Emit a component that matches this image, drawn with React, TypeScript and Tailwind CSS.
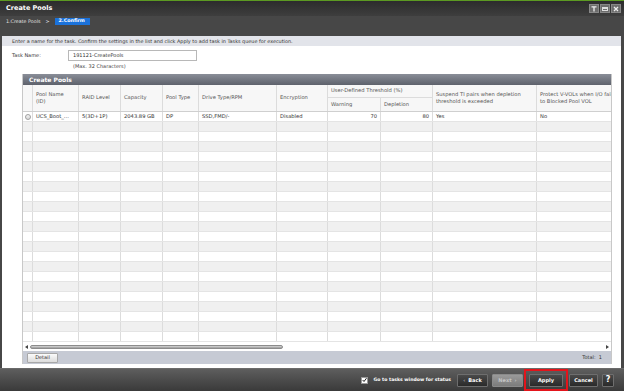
import React from "react";

const cols = [10, 46, 42, 42, 36, 78, 51, 53, 52, 104, 110];

function Cell({ w, children, className = "" }: { w: number; children?: React.ReactNode; className?: string }) {
  return (
    <div
      className={`shrink-0 h-full border-r border-[#dcdcdc] flex items-center overflow-hidden whitespace-nowrap ${className}`}
      style={{ width: w }}
    >
      {children}
    </div>
  );
}

function DataRow({ i, first }: { i: number; first?: boolean }) {
  const bg = i % 2 === 0 ? "bg-white" : "bg-[#f0f0f0]";
  return (
    <div className={`flex h-[10px] border-b border-[#e4e4e4] ${bg}`}>
      {cols.map((w, ci) => {
        let content: React.ReactNode = null;
        let cls = "px-[3px]";
        if (first) {
          const vals = ["", "UCS_Boot_...", "5(3D+1P)", "2043.89 GB", "DP", "SSD,FMD/-", "Disabled", "70", "80", "Yes", "No"];
          if (ci === 0) {
            content = <div className="w-[6px] h-[6px] rounded-full border border-[#a0a0a0] bg-gradient-to-b from-[#f4f4f4] to-[#d8d8d8] ml-[1px]" />;
            cls = "justify-center";
          } else {
            content = vals[ci];
            if (ci === 7 || ci === 8) cls = "px-[3px] justify-end";
          }
        }
        return (
          <Cell key={ci} w={w} className={cls}>
            {content}
          </Cell>
        );
      })}
    </div>
  );
}

function FooterBtn({ children, disabled, w }: { children: React.ReactNode; disabled?: boolean; w: number }) {
  return (
    <div
      className={`h-[13px] flex items-center justify-center text-[5px] font-bold rounded-[1px] border ${
        disabled
          ? "bg-gradient-to-b from-[#9a9a9a] to-[#7c7c7c] border-[#8a8a8a] text-[#c4c4c4]"
          : "bg-gradient-to-b from-[#4a4a4a] to-[#2a2a2a] border-[#6e6e6e] text-white"
      }`}
      style={{ width: w }}
    >
      {children}
    </div>
  );
}

export default function App() {
  return (
    <div className="w-[624px] h-[391px] flex flex-col overflow-hidden bg-[#474747] font-['DejaVu_Sans',sans-serif] leading-none">
      {/* title bar */}
      <div className="h-[16px] shrink-0 border-t border-[#5c9a22] bg-gradient-to-b from-[#2c2c2c] to-[#3e3e3e] flex items-center justify-between pl-[6px] pr-[3px]">
        <span className="text-white font-bold text-[6.5px]">Create Pools</span>
        <div className="flex gap-[1px]">
          <div className="w-[10px] h-[9px] bg-[#6d6d6d] border border-[#888] flex items-center justify-center">
            <svg width="6" height="6" viewBox="0 0 6 6">
              <path d="M0.5 0.8 H5.5 M3 0.8 V5.5" stroke="#eee" strokeWidth="1.3" />
            </svg>
          </div>
          <div className="w-[10px] h-[9px] bg-[#6d6d6d] border border-[#888] flex items-center justify-center">
            <div className="w-[6px] h-[4px] border border-[#ddd] border-t-2" />
          </div>
          <div className="w-[10px] h-[9px] bg-[#6d6d6d] border border-[#888] flex items-center justify-center">
            <svg width="6" height="6" viewBox="0 0 6 6">
              <path d="M1 1 L5 5 M5 1 L1 5" stroke="#eee" strokeWidth="1.3" />
            </svg>
          </div>
        </div>
      </div>
      {/* breadcrumb */}
      <div className="h-[20px] shrink-0 bg-[#474747] flex items-start pt-[2px] pl-[6px] gap-[5px] text-[4.8px] text-[#e0e0e0]">
        <span className="mt-[2px]">1.Create Pools</span>
        <span className="mt-[2px]">&gt;</span>
        <span className="bg-[#1b72db] text-white font-bold h-[7px] px-[4px] flex items-center w-[35px]">2.Confirm</span>
      </div>
      {/* body */}
      <div className="flex-1 flex flex-col bg-white ml-[2px] mr-[3px] min-h-0">
        <div className="h-[10px] shrink-0 bg-[#e2e4ea] flex items-center pl-[10px] text-[4.9px] text-[#333]">
          Enter a name for the task. Confirm the settings in the list and click Apply to add task in Tasks queue for execution.
        </div>
        <div className="h-[28px] shrink-0 flex flex-col pl-[10px] pt-[4px]">
          <div className="flex items-center">
            <span className="w-[56px] text-[5px] text-[#333]">Task Name:</span>
            <div className="w-[129px] h-[11px] border border-[#b8b8b8] flex items-center pl-[4px] text-[5px] text-[#333]">
              191121-CreatePools
            </div>
          </div>
          <span className="ml-[61px] mt-[3px] text-[5px] text-[#444]">(Max. 32 Characters)</span>
        </div>
        {/* panel */}
        <div className="ml-[20px] w-[590px] h-[290px] shrink-0 flex flex-col overflow-hidden border-x border-[#c8c8c8] text-[5.2px] text-[#333]">
          <div className="h-[11px] shrink-0 bg-gradient-to-b from-[#8a8e98] to-[#5e626c] flex items-center pl-[6px] text-white font-bold text-[6px]">
            Create Pools
          </div>
          {/* header */}
          <div className="h-[27px] shrink-0 flex bg-[#f7f7f7] border-b border-[#cfcfcf] text-[#555]">
            <Cell w={cols[0]} />
            <Cell w={cols[1]} className="px-[3px] items-start pt-[7px]">
              <div className="flex flex-col gap-[2px] whitespace-nowrap">
                <span>Pool Name</span>
                <span>(ID)</span>
              </div>
            </Cell>
            <Cell w={cols[2]} className="px-[3px]">RAID Level</Cell>
            <Cell w={cols[3]} className="px-[3px]">Capacity</Cell>
            <Cell w={cols[4]} className="px-[3px]">Pool Type</Cell>
            <Cell w={cols[5]} className="px-[3px]">Drive Type/RPM</Cell>
            <Cell w={cols[6]} className="px-[3px]">Encryption</Cell>
            <div className="shrink-0 flex flex-col border-r border-[#dcdcdc]" style={{ width: cols[7] + cols[8] }}>
              <div className="h-[13px] flex items-center px-[3px] border-b border-[#dcdcdc] whitespace-nowrap">
                User-Defined Threshold (%)
              </div>
              <div className="flex flex-1">
                <Cell w={cols[7]} className="px-[3px]">Warning</Cell>
                <div className="flex items-center px-[3px]" style={{ width: cols[8] - 1 }}>
                  Depletion
                </div>
              </div>
            </div>
            <Cell w={cols[9]} className="px-[3px]">
              <div className="flex flex-col gap-[2px]">
                <span>Suspend TI pairs when depletion</span>
                <span>threshold is exceeded</span>
              </div>
            </Cell>
            <Cell w={cols[10]} className="px-[3px]">
              <div className="flex flex-col gap-[2px]">
                <span>Protect V-VOLs when I/O fails</span>
                <span>to Blocked Pool VOL</span>
              </div>
            </Cell>
          </div>
          {/* rows */}
          <div className="h-[230px] shrink-0 flex flex-col overflow-hidden">
            {Array.from({ length: 23 }).map((_, i) => (
              <DataRow key={i} i={i} first={i === 0} />
            ))}
          </div>
          {/* scrollbar */}
          <div className="h-[9px] shrink-0 bg-white flex items-center px-[2px] gap-[2px]">
            <svg width="3" height="4" viewBox="0 0 3 4">
              <path d="M3 0 L0 2 L3 4 Z" fill="#444" />
            </svg>
            <div className="w-[253px] h-[4px] rounded-full bg-gradient-to-b from-[#d8d8d8] to-[#9a9a9a] border border-[#8c8c8c]" />
            <div className="flex-1" />
            <svg width="3" height="4" viewBox="0 0 3 4">
              <path d="M0 0 L3 2 L0 4 Z" fill="#444" />
            </svg>
          </div>
          {/* bottom bar */}
          <div className="h-[13px] shrink-0 bg-[#c6cad4] flex items-center justify-between pl-[4px] pr-[9px]">
            <div className="w-[31px] h-[10px] bg-gradient-to-b from-[#fbfbfb] to-[#dcdcdc] border border-[#a8a8a8] rounded-[1px] flex items-center justify-center text-[5px] text-[#333]">
              Detail
            </div>
            <span className="text-[5px] text-[#333]">Total:&nbsp;&nbsp;1</span>
          </div>
        </div>
        <div className="flex-1" />
      </div>
      {/* footer */}
      <div className="h-[23px] shrink-0 bg-gradient-to-b from-[#5e5e5e] to-[#3a3a3a] flex items-center justify-end pr-[10px] border-t border-[#6a6a6a]">
        <div className="w-[7px] h-[7px] bg-white border border-[#999] flex items-center justify-center mr-[5px]">
          <svg width="6" height="6" viewBox="0 0 6 6">
            <path d="M0.8 3 L2.4 4.8 L5.4 0.8" stroke="#222" strokeWidth="1.2" fill="none" />
          </svg>
        </div>
        <span className="text-[4.6px] font-bold text-white mr-[6px]">Go to tasks window for status</span>
        <FooterBtn w={31}>
          <span className="text-[#aaa] mr-[3px]">‹</span>Back
        </FooterBtn>
        <div className="w-[4px]" />
        <FooterBtn w={31} disabled>
          Next<span className="ml-[3px]">›</span>
        </FooterBtn>
        <div className="w-[1px]" />
        <div className="border-2 border-[#e3141b] px-[3px] h-[22px] flex items-center">
          <FooterBtn w={34}>Apply</FooterBtn>
        </div>
        <div className="w-[1px]" />
        <FooterBtn w={29}>Cancel</FooterBtn>
        <div className="w-[4px]" />
        <FooterBtn w={12}>
          <span className="text-[8px]">?</span>
        </FooterBtn>
      </div>
    </div>
  );
}
